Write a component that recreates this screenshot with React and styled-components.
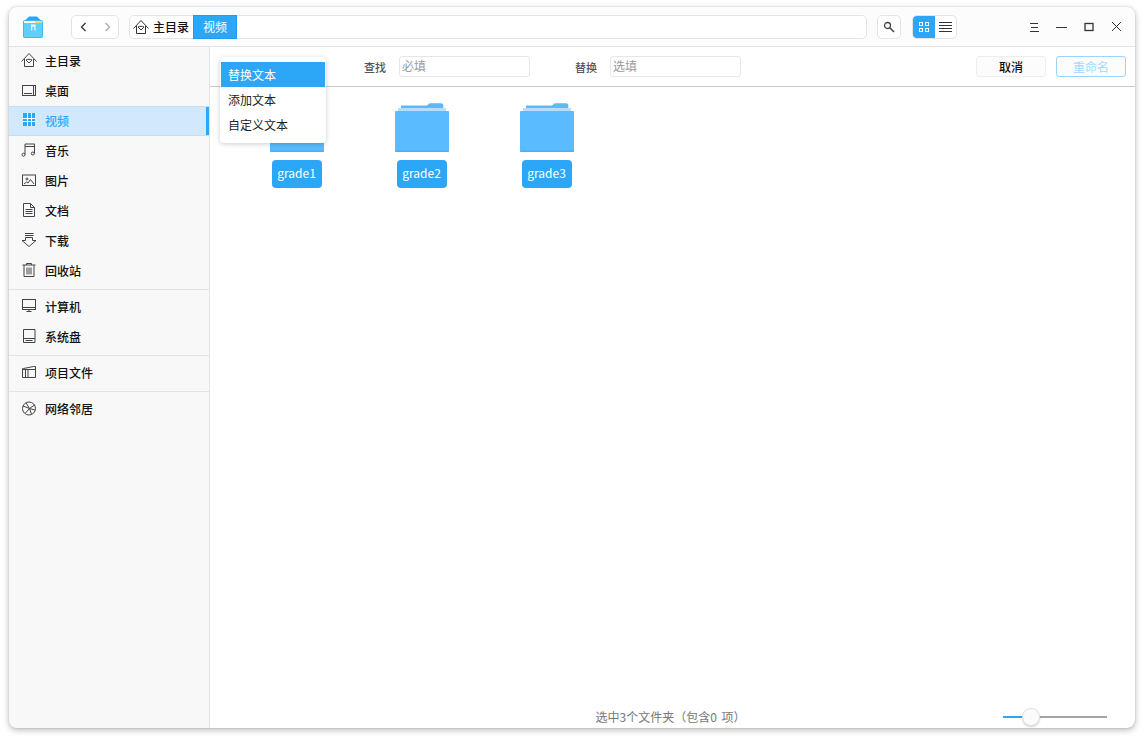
import React from "react";
import styled, { createGlobalStyle } from "styled-components";

const Global = createGlobalStyle`
  html, body { margin: 0; padding: 0; background: #fff; }
  body { font-family: "Noto Sans CJK SC", "Noto Sans", sans-serif; overflow: hidden; }
`;

const Page = styled.div`
  width: 1144px;
  height: 739px;
  padding: 7px 9px 11px;
  box-sizing: border-box;
`;

const Window = styled.div`
  position: relative;
  width: 1126px;
  height: 721px;
  border-radius: 8px;
  background: #fff;
  box-shadow: 0 0 1px rgba(0, 0, 0, 0.35), 0 2px 6px rgba(0, 0, 0, 0.28);
  overflow: hidden;
  display: flex;
  flex-direction: column;
`;

const TitleBar = styled.div`
  height: 40px;
  flex: none;
  box-sizing: border-box;
  background: #fcfcfc;
  border-bottom: 1px solid #e3e3e3;
  display: flex;
  align-items: center;
  padding: 0 0 0 13px;
`;

const Logo = styled.svg`
  width: 22px;
  height: 22px;
  flex: none;
  margin-right: 27px;
`;

const ButtonGroup = styled.div`
  display: flex;
  height: 24px;
  box-sizing: border-box;
  background: #fff;
  border: 1px solid #e4e4e4;
  border-radius: 5px;
  overflow: hidden;
  flex: none;
`;

const NavGroup = styled(ButtonGroup)`
  width: 48px;
  margin-right: 10px;
`;

const NavButton = styled.div`
  width: 23px;
  display: flex;
  align-items: center;
  justify-content: center;
`;

const Crumbs = styled.div`
  width: 738px;
  height: 24px;
  box-sizing: border-box;
  flex: none;
  display: flex;
  align-items: center;
  background: #fff;
  border: 1px solid #e4e4e4;
  border-radius: 5px;
  margin-right: 10px;
`;

const CrumbHome = styled.div`
  display: flex;
  align-items: center;
  gap: 4px;
  padding-left: 3px;
  width: 63px;
  box-sizing: border-box;
  font-size: 12px;
  font-weight: 500;
  color: #111;
`;

const CrumbActive = styled.div`
  width: 44px;
  height: 24px;
  margin-top: -1px;
  margin-bottom: -1px;
  box-sizing: border-box;
  background: #2ca7f8;
  border: 1px solid #1f9af5;
  color: #fff;
  font-size: 12px;
  text-align: center;
  line-height: 21px;
`;

const SearchButton = styled(ButtonGroup)`
  width: 24px;
  align-items: center;
  justify-content: center;
  margin-right: 11px;
`;

const ViewGroup = styled(ButtonGroup)`
  width: 45px;
`;

const ViewButton = styled.div`
  flex: 1;
  display: flex;
  align-items: center;
  justify-content: center;
  background: ${(p) => (p.$active ? "#2ca7f8" : "transparent")};
`;

const WindowButtons = styled.div`
  margin-left: auto;
  display: flex;
  align-items: center;
  margin-right: 5px;
`;

const WindowButton = styled.div`
  width: 27.5px;
  height: 24px;
  display: flex;
  align-items: center;
  justify-content: center;
`;

const Body = styled.div`
  flex: 1;
  display: flex;
  min-height: 0;
`;

const Sidebar = styled.div`
  width: 201px;
  box-sizing: border-box;
  flex: none;
  background: #f8f8f8;
  border-right: 1px solid #e3e3e3;
`;

const SideList = styled.div`
  margin-top: -1px;
`;

const SideItem = styled.div`
  position: relative;
  height: 30px;
  box-sizing: border-box;
  display: flex;
  align-items: center;
  gap: 8px;
  padding: 0 0 2px 12px;
  font-size: 12px;
  font-weight: 500;
  color: ${(p) => (p.$active ? "#2ca7f8" : "#111")};
  background: ${(p) => (p.$active ? "#d2e9fd" : "transparent")};
  border-top: ${(p) => (p.$active ? "1px solid #bfe0fb" : "none")};
  border-bottom: ${(p) => (p.$active ? "1px solid #bfe0fb" : "none")};
  ${(p) => p.$active && "&::after { content: ''; position: absolute; right: 0; top: 0; bottom: 0; width: 3px; background: #2ca7f8; }"}
`;

const SideDivider = styled.div`
  height: 1px;
  margin: 3px 0 2px;
  background: #e2e2e2;
`;

const IconSvg = styled.svg`
  width: 16px;
  height: 16px;
  flex: none;
  fill: none;
  stroke: ${(p) => p.$color || "#444"};
  stroke-width: 1;
`;

const Main = styled.div`
  flex: 1;
  display: flex;
  flex-direction: column;
  min-width: 0;
  position: relative;
`;

const RenameBar = styled.div`
  height: 40px;
  flex: none;
  box-sizing: border-box;
  border-bottom: 1px solid #c9c9c9;
  display: flex;
  align-items: center;
  padding: 0 9px 0 154px;
`;

const FieldLabel = styled.span`
  width: 35px;
  font-size: 11px;
  font-weight: 500;
  color: #555;
`;

const Field = styled.div`
  width: 130.5px;
  height: 21px;
  box-sizing: border-box;
  border: 1px solid #e6e6e6;
  border-radius: 3px;
  font-size: 12px;
  line-height: 18px;
  padding-left: 2px;
  color: #9a9a9a;
  margin-right: 45.5px;
`;

const BarActions = styled.div`
  margin-left: auto;
  display: flex;
  gap: 10px;
`;

const BarButton = styled.div`
  width: 70px;
  height: 21px;
  box-sizing: border-box;
  border: 1px solid ${(p) => (p.$primary ? "#9ed3fb" : "#eeeeee")};
  border-radius: 3px;
  background: #fcfcfc;
  font-size: 12px;
  font-weight: ${(p) => (p.$primary ? 400 : 500)};
  line-height: 19px;
  text-align: center;
  color: ${(p) => (p.$primary ? "#a6d8fb" : "#111")};
`;

const Menu = styled.div`
  position: absolute;
  left: 10px;
  top: 10px;
  width: 106px;
  height: 86px;
  box-sizing: border-box;
  padding: 5px 1px;
  background: #fff;
  border-radius: 4px;
  box-shadow: 0 1px 5px rgba(0, 0, 0, 0.2);
  z-index: 2;
`;

const MenuItem = styled.div`
  height: 25px;
  line-height: 25px;
  padding-left: 7px;
  font-size: 12px;
  color: ${(p) => (p.$active ? "#fff" : "#222")};
  background: ${(p) => (p.$active ? "#2ca7f8" : "transparent")};
`;

const Files = styled.div`
  flex: 1;
  display: flex;
  align-items: flex-start;
  padding: 15px 0 0 24px;
`;

const FileCell = styled.div`
  width: 125px;
  display: flex;
  flex-direction: column;
  align-items: center;
  gap: 7px;
`;

const FolderIcon = styled.svg`
  width: 56px;
  height: 51px;
  display: block;
`;

const FileName = styled.div`
  width: 50px;
  height: 28px;
  border-radius: 4px;
  background: #2ca7f8;
  color: #fff;
  font-size: 12px;
  line-height: 26px;
  text-align: center;
`;

const StatusBar = styled.div`
  position: relative;
  height: 22px;
  flex: none;
  box-sizing: border-box;
  padding-right: 4px;
  font-size: 12px;
  color: #777;
  text-align: center;
  line-height: 22px;
  word-spacing: 2px;
`;

const SliderBox = styled.div`
  position: absolute;
  left: 793px;
  top: 10px;
  width: 104px;
  height: 2px;
  background: #a5a5a5;
`;

const SliderFill = styled.div`
  width: 20px;
  height: 2px;
  background: #2ca7f8;
`;

const SliderThumb = styled.div`
  position: absolute;
  left: 19px;
  top: -8px;
  width: 18px;
  height: 18px;
  box-sizing: border-box;
  border-radius: 50%;
  background: #fbfbfb;
  border: 1px solid #e2e2e2;
  box-shadow: 0 1px 2px rgba(0, 0, 0, 0.2);
`;

const icons = {
  home: (
    <>
      <path d="M.5 9.500 8 1.500l7.500 8M3.500 7v7.500h9V7" />
      <path d="M5 8c1.800-1 4.200-1 6 0l-3 3z" />
    </>
  ),
  desktop: (
    <>
      <rect x="1.500" y="3.500" width="13" height="10" />
      <path d="M12.500 3.500v10M3 11.500h8" />
    </>
  ),
  video: (
    <>
      <rect x="2" y="1" width="12" height="13" fill="#2ca7f8" stroke="none" />
      <path d="M6.500 1v13M10.500 1v13M2 6.500h12M2 9.500h12" stroke="#fff" />
    </>
  ),
  music: (
    <>
      <path d="M4 12.500V2h9.500v9.500M4 4.500h9.500" />
      <circle cx="2.500" cy="12.700" r="1.500" />
      <circle cx="11.800" cy="11.500" r="1.500" />
    </>
  ),
  picture: (
    <>
      <rect x="1.500" y="3" width="13" height="10.500" />
      <circle cx="6" cy="7" r="1" />
      <path d="M3 12l2.500-2 1.500 1 2.500-3.500 3.500 4.500" />
    </>
  ),
  doc: (
    <>
      <path d="M2.500 1.500h7l4 4v9h-11z" />
      <path d="M9.500 1.500v4h4M4.500 7.500h7M4.500 9.500h7M4.500 11.500h7" />
    </>
  ),
  download: (
    <>
      <path d="M4 1.500h8.500M4 3.500h8.500M4.500 5.500v3H1L8 14.500l7-6h-3.500v-3z" />
    </>
  ),
  trash: (
    <>
      <path d="M1.500 3h13M5.500 3V1.500h5V3M3 3v11.500h10V3M6 5.500v7M8 5.500v7M10 5.500v7" />
    </>
  ),
  computer: (
    <>
      <rect x="1.500" y="1.500" width="13" height="10" />
      <path d="M1.500 9.500h13M5.500 13.500h5M8 11.500v2" />
    </>
  ),
  disk: (
    <>
      <path d="M2.500 1.500h11.500v13H2.500z" />
      <path d="M2.500 10.500h11.500M4.500 12.500h7" />
    </>
  ),
  project: (
    <>
      <path d="M1.500 4.500h1l10-2h2v11h-13z" />
      <path d="M1.500 5.500h13M4.500 5.500v8M7 5.500v8" />
    </>
  ),
  network: (
    <>
      <circle cx="8" cy="8.500" r="6.500" />
      <path d="M2 6l6.500 2.500M5 2.800 8.500 8.500l-4 4.500M13.500 5 8.500 8.500l2 5.500M8.500 8.500 14 10" />
    </>
  ),
};

function Icon({ name, color }) {
  return (
    <IconSvg viewBox="0 0 16 16" $color={color}>
      {icons[name]}
    </IconSvg>
  );
}

const sideGroups = [
  [
    ["home", "主目录"],
    ["desktop", "桌面"],
    ["video", "视频", true],
    ["music", "音乐"],
    ["picture", "图片"],
    ["doc", "文档"],
    ["download", "下载"],
    ["trash", "回收站"],
  ],
  [
    ["computer", "计算机"],
    ["disk", "系统盘"],
  ],
  [["project", "项目文件"]],
  [["network", "网络邻居"]],
];

function Folder() {
  return (
    <FolderIcon viewBox="0 0 56 51">
      <path d="M7 3.500h25c1 0 1.500-.3 2.200-1 .7-.8 1.300-1.300 2.300-1.300H47c1.500 0 2.300.8 2.300 2V8H7z" fill="#5ab9fb" />
      <rect x="4" y="6" width="48" height="4" rx="1" fill="#b5defc" />
      <path d="M1 10c0-.6.4-1 1-1h52c.6 0 1 .4 1 1v38.500c0 .8-.6 1.500-1.500 1.500h-51C1.600 50 1 49.300 1 48.500z" fill="#5abbfe" />
      <path d="M1 48.500h54v.5c0 .6-.5 1-1.500 1h-51C1.500 50 1 49.600 1 49z" fill="#4ab0f6" />
    </FolderIcon>
  );
}

export default function App() {
  return (
    <Page>
      <Global />
      <Window>
        <TitleBar>
          <Logo viewBox="0 0 22 22">
            <path d="M2.500 5 7 .5h8L19.500 5z" fill="#2aa8ef" />
            <rect x="1.500" y="4.500" width="19" height="17" rx="1" fill="#5cd0fb" stroke="#41b8f0" />
            <rect x="2" y="5" width="18" height="2" fill="#fff8e0" />
            <rect x="13" y="5" width="7" height="2" fill="#f5d76e" />
            <path d="M9 8.500h4.500v6h-1.200v-4h-2v4H9z" fill="#e8f9ff" />
          </Logo>
          <NavGroup>
            <NavButton>
              <svg width="12" height="12" viewBox="0 0 12 12" fill="none" stroke="#333" strokeWidth="1.300">
                <path d="M7.500 2 3.500 6l4 4" />
              </svg>
            </NavButton>
            <NavButton>
              <svg width="12" height="12" viewBox="0 0 12 12" fill="none" stroke="#aaa" strokeWidth="1.300">
                <path d="M4.500 2l4 4-4 4" />
              </svg>
            </NavButton>
          </NavGroup>
          <Crumbs>
            <CrumbHome>
              <Icon name="home" color="#333" />
              主目录
            </CrumbHome>
            <CrumbActive>视频</CrumbActive>
          </Crumbs>
          <SearchButton>
            <svg width="14" height="14" viewBox="0 0 14 14" fill="none" stroke="#444">
              <circle cx="5.500" cy="5.500" r="3" strokeWidth="1.300" />
              <path d="M8 8l4 4" strokeWidth="1.600" />
            </svg>
          </SearchButton>
          <ViewGroup>
            <ViewButton $active>
              <svg width="12" height="12" viewBox="0 0 12 12" fill="none" stroke="#fff">
                <rect x="1.500" y="1.500" width="3" height="3" />
                <rect x="7.500" y="1.500" width="3" height="3" />
                <rect x="1.500" y="7.500" width="3" height="3" />
                <rect x="7.500" y="7.500" width="3" height="3" />
              </svg>
            </ViewButton>
            <ViewButton>
              <svg width="13" height="12" viewBox="0 0 13 12" fill="none" stroke="#333">
                <path d="M0 1.500h13M0 4.500h13M0 7.500h13M0 10.500h13" />
              </svg>
            </ViewButton>
          </ViewGroup>
          <WindowButtons>
            <WindowButton>
              <svg width="12" height="12" viewBox="0 0 12 12" fill="none" stroke="#333">
                <path d="M2 2.500h8M3 6.500h7M2 10.500h9" />
              </svg>
            </WindowButton>
            <WindowButton>
              <svg width="12" height="12" viewBox="0 0 12 12" fill="none" stroke="#333">
                <path d="M1 6.500h11" />
              </svg>
            </WindowButton>
            <WindowButton>
              <svg width="10" height="10" viewBox="0 0 10 10" fill="none" stroke="#333" strokeWidth="1.300">
                <rect x="1" y="1.500" width="8" height="7" />
              </svg>
            </WindowButton>
            <WindowButton>
              <svg width="11" height="11" viewBox="0 0 11 11" fill="none" stroke="#333">
                <path d="M1 1l9 9M10 1l-9 9" />
              </svg>
            </WindowButton>
          </WindowButtons>
        </TitleBar>
        <Body>
          <Sidebar>
            <SideList>
              {sideGroups.map((group, i) => (
                <React.Fragment key={i}>
                  {i > 0 && <SideDivider />}
                  {group.map(([icon, label, active]) => (
                    <SideItem key={label} $active={active}>
                      <Icon name={icon} />
                      {label}
                    </SideItem>
                  ))}
                </React.Fragment>
              ))}
            </SideList>
          </Sidebar>
          <Main>
            <RenameBar>
              <FieldLabel>查找</FieldLabel>
              <Field>必填</Field>
              <FieldLabel>替换</FieldLabel>
              <Field>选填</Field>
              <BarActions>
                <BarButton>取消</BarButton>
                <BarButton $primary>重命名</BarButton>
              </BarActions>
            </RenameBar>
            <Menu>
              <MenuItem $active>替换文本</MenuItem>
              <MenuItem>添加文本</MenuItem>
              <MenuItem>自定义文本</MenuItem>
            </Menu>
            <Files>
              {["grade1", "grade2", "grade3"].map((name) => (
                <FileCell key={name}>
                  <Folder />
                  <FileName>{name}</FileName>
                </FileCell>
              ))}
            </Files>
            <StatusBar>
              选中3个文件夹（包含0 项）
              <SliderBox>
                <SliderFill />
                <SliderThumb />
              </SliderBox>
            </StatusBar>
          </Main>
        </Body>
      </Window>
    </Page>
  );
}
